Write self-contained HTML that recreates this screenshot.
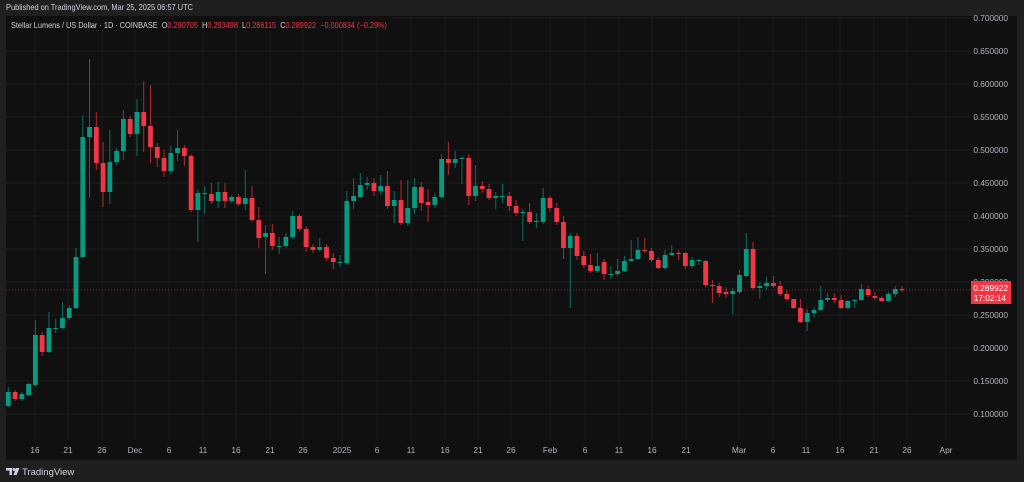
<!DOCTYPE html>
<html><head><meta charset="utf-8"><style>
body{margin:0;width:1024px;height:482px;background:#1f1f1f;overflow:hidden;font-family:"Liberation Sans",sans-serif}
svg{position:absolute;left:0;top:0}
</style></head><body>
<svg id="s" width="1024" height="482" xmlns="http://www.w3.org/2000/svg">
<text x="6" y="10" font-size="8.5" fill="#d1d4dc" font-family="Liberation Sans, sans-serif" textLength="187" lengthAdjust="spacingAndGlyphs">Published on TradingView.com, Mar 25, 2025 06:57 UTC</text>
<rect x="6" y="16" width="1011" height="444" fill="#101010"/>
<g id="grid"></g>
<g id="c"></g>
<line x1="6" y1="290" x2="970" y2="290" stroke="#f23645" stroke-opacity="0.55" stroke-width="1" stroke-dasharray="1,2"/>
<rect x="6" y="17" width="385" height="13" fill="#101010"/>
<text x="11" y="28" font-size="8.3" font-family="Liberation Sans, sans-serif" fill="#d1d4dc" textLength="376" lengthAdjust="spacingAndGlyphs" xml:space="preserve">Stellar Lumens / US Dollar · 1D · COINBASE  O<tspan fill="#f23645">0.290705</tspan>  H<tspan fill="#f23645">0.293498</tspan>  L<tspan fill="#f23645">0.286115</tspan>  C<tspan fill="#f23645">0.289922</tspan>  <tspan fill="#f23645">−0.000834 (−0.29%)</tspan></text>
<rect x="971" y="281" width="40" height="23" fill="#f23645"/>
<text x="1008" y="291" font-size="8.3" fill="#fff" text-anchor="end" font-family="Liberation Sans, sans-serif">0.289922</text>
<text x="1006" y="301" font-size="8.3" fill="#fff" text-anchor="end" font-family="Liberation Sans, sans-serif">17:02:14</text>
<g transform="translate(6,466)" fill="#d1d4dc"><path d="M0 2h6v7h-2.5v-4.5h-3.5z"/><circle cx="8" cy="3.5" r="1.5"/><path d="M10 2h3.5l-3 7h-3z"/></g>
<text x="22" y="475" font-size="9.5" fill="#d1d4dc" font-family="Liberation Sans, sans-serif">TradingView</text>
</svg>
<script>
const NS="http://www.w3.org/2000/svg",g=document.getElementById('grid'),cg=document.getElementById('c');
function el(p,t,a,txt){const e=document.createElementNS(NS,t);for(const k in a)e.setAttribute(k,a[k]);if(txt)e.textContent=txt;p.appendChild(e);return e;}
const prices=["0.700000","0.650000","0.600000","0.550000","0.500000","0.450000","0.400000","0.350000","0.300000","0.250000","0.200000","0.150000","0.100000"];
prices.forEach((p,i)=>{const y=18+i*33;el(g,'line',{x1:6,x2:970,y1:y,y2:y,stroke:'#1c1c1c'});el(g,'text',{x:1008,y:y+3,'font-size':8.3,fill:'#b2b5be','text-anchor':'end','font-family':'Liberation Sans, sans-serif'},p);});
const dates=[[35,"16"],[68,"21"],[102,"26"],[135,"Dec"],[169,"6"],[203,"11"],[236,"16"],[270,"21"],[303,"26"],[342,"2025"],[377,"6"],[411,"11"],[445,"16"],[478,"21"],[511,"26"],[550,"Feb"],[585,"6"],[619,"11"],[652,"16"],[686,"21"],[739,"Mar"],[773,"6"],[806,"11"],[840,"16"],[874,"21"],[907,"26"],[946,"Apr"]];
dates.forEach(([x,t])=>{el(g,'line',{x1:x,x2:x,y1:16,y2:440,stroke:'#1c1c1c'});el(g,'text',{x:x,y:453,'font-size':8.3,fill:'#b2b5be','text-anchor':'middle','font-family':'Liberation Sans, sans-serif'},t);});
const d=[[406,392,387,407],[392,399,390,401],[399,394,392,401],[395,384,383,396],[385,335,320,386],[335,352,332,356],[352,328,312,353],[328,328,319,333],[328,318,302,329],[318,308,305,320],[308,257,248,309],[257,137,115,258],[137,127,59,198],[127,163,112,170],[163,192,142,207],[192,162,130,204],[162,151,148,165],[151,119,110,160],[119,134,116,137],[134,112,99,156],[112,126,81,152],[126,147,85,163],[147,158,143,167],[158,171,150,177],[171,153,146,174],[153,148,130,161],[148,156,145,166],[156,210,154,212],[210,193,189,242],[193,193,186,214],[194,201,183,204],[201,192,182,208],[192,201,183,208],[201,197,195,203],[197,204,194,206],[204,198,170,210],[198,220,186,222],[220,238,207,248],[237,233,225,274],[233,246,224,250],[246,246,237,254],[246,237,233,248],[237,216,211,239],[216,229,214,231],[229,247,226,252],[247,250,244,253],[250,247,238,252],[247,258,244,261],[258,262,253,269],[262,262,255,267],[263,201,191,265],[201,196,178,209],[197,185,173,193],[185,183,177,190],[183,191,178,196],[191,186,175,195],[186,206,171,209],[206,200,191,223],[200,223,180,225],[223,208,180,226],[208,187,178,214],[187,203,182,211],[202,205,189,222],[205,197,193,208],[197,159,154,199],[159,163,142,175],[163,159,151,168],[159,158,156,184],[158,196,154,205],[196,186,165,201],[186,189,181,193],[189,198,184,200],[198,196,192,209],[196,196,184,203],[196,206,192,211],[206,213,200,216],[212,212,209,241],[212,222,203,224],[221,221,213,228],[222,198,188,224],[198,208,196,212],[208,222,203,225],[222,248,216,259],[248,236,233,308],[236,256,233,260],[256,265,251,268],[265,271,254,273],[271,266,253,273],[262,274,259,280],[274,274,266,279],[274,271,259,276],[271,261,256,272],[261,259,240,262],[259,250,237,260],[250,251,238,253],[251,260,248,262],[260,268,257,269],[268,255,250,270],[255,253,245,256],[253,254,250,260],[253,266,252,269],[266,260,257,268],[260,260,259,265],[261,285,260,287],[285,286,280,303],[286,293,283,297],[292,294,287,298],[294,291,288,314],[292,275,270,294],[276,249,233,277],[249,288,242,290],[288,286,282,299],[286,283,277,290],[283,286,276,288],[286,294,281,296],[294,299,290,301],[299,308,299,309],[308,322,299,323],[322,313,309,331],[313,310,307,318],[310,300,286,311],[300,298,293,302],[298,300,293,303],[300,308,295,309],[308,301,300,309],[300,300,299,308],[300,289,284,301],[289,295,286,297],[296,298,292,300],[298,301,296,302],[301,294,292,302],[294,289,286,297],[289,290,286,292]];
const step=(902-8.3)/(d.length-1);
d.forEach((c,i)=>{const x=8.3+i*step;const up=c[1]<=c[0];const col=up?'#089981':'#f23645';
el(cg,'line',{x1:x,x2:x,y1:c[2],y2:c[3],stroke:col,'stroke-opacity':0.7,'stroke-width':1});
const t=Math.min(c[0],c[1]),h=Math.max(1,Math.abs(c[1]-c[0]));el(cg,'rect',{x:x-2.4,y:t,width:4.8,height:h,fill:col});});
</script>
</body></html>
